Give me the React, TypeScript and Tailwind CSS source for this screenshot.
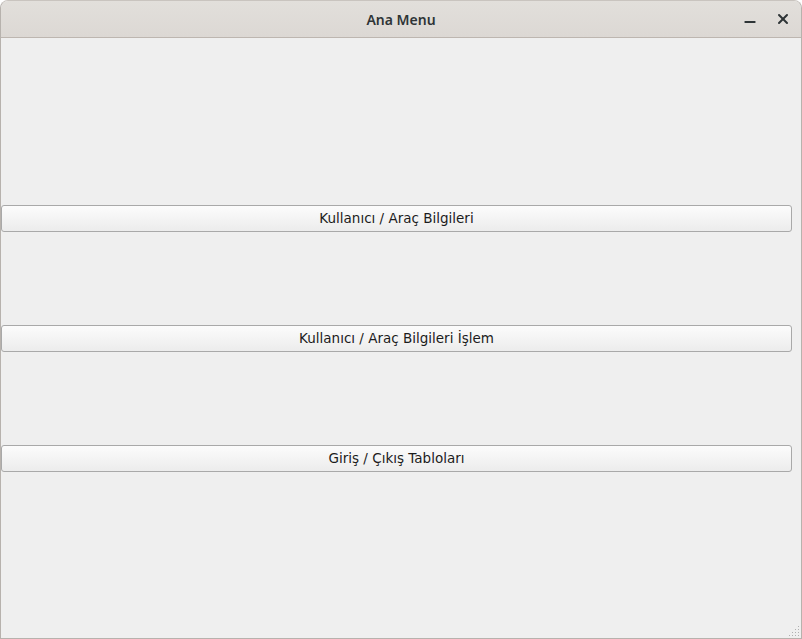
import { X, Minus } from "lucide-react";

// Qt-style push button, full width
function MenuButton({ label }: { label: string }) {
  return (
    <button className="h-[27px] w-[791px] rounded-[3px] border border-[#a9a9a9] bg-gradient-to-b from-[#fcfcfc] to-[#ececec] text-[13.5px] text-[#1c1c1c] leading-none">
      {label}
    </button>
  );
}

export default function App() {
  return (
    <div className="h-[639px] w-[802px] bg-white font-['DejaVu_Sans',sans-serif]">
      <div className="flex h-full w-full flex-col overflow-hidden rounded-t-[8px] border border-[#b7b2ad] border-t-[#c9c4bf] bg-[#efefef]">
        {/* title bar */}
        <div className="relative flex h-[37px] shrink-0 items-center justify-center border-b border-[#bdb6b0] bg-gradient-to-b from-[#e2dfdb] to-[#dcd8d4]">
          <span className="font-['Noto_Sans',sans-serif] text-[14px] font-semibold text-[#2e3436]">Ana Menu</span>
          <div className="absolute right-[10px] top-0 flex h-full items-center gap-[17px]">
            <Minus className="mt-[6px] h-[16px] w-[16px] text-[#2e3436]" strokeWidth={3} />
            <X className="h-[16px] w-[16px] text-[#2e3436]" strokeWidth={3} />
          </div>
        </div>
        {/* body */}
        <div className="relative flex flex-1 flex-col gap-[93px] pt-[167px]">
          <MenuButton label="Kullanıcı / Araç Bilgileri" />
          <MenuButton label="Kullanıcı / Araç Bilgileri İşlem" />
          <MenuButton label="Giriş / Çıkış Tabloları" />
          <div className="absolute bottom-[2px] right-[2px] grid grid-cols-4 gap-[2px]">
            {[0, 0, 0, 1, 0, 0, 1, 1, 0, 1, 1, 1, 1, 1, 1, 1].map((v, i) => (
              <div key={i} className={`h-[1px] w-[1px] ${v ? "bg-[#b0b0b0]" : "bg-transparent"}`} />
            ))}
          </div>
        </div>
      </div>
    </div>
  );
}
